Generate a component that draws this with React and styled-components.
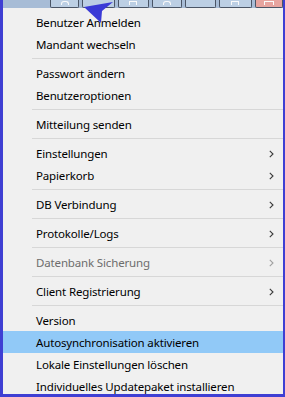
import React from "react";
import styled, { createGlobalStyle } from "styled-components";

const GlobalStyle = createGlobalStyle`
  html, body {
    margin: 0;
    padding: 0;
    background: #ffffff;
  }
  body {
    font-family: "Noto Sans", "Segoe UI", sans-serif;
  }
`;

const items = [
  { label: "Benutzer Anmelden" },
  { label: "Mandant wechseln" },
  { sep: true },
  { label: "Passwort ändern" },
  { label: "Benutzeroptionen" },
  { sep: true },
  { label: "Mitteilung senden" },
  { sep: true },
  { label: "Einstellungen", sub: true },
  { label: "Papierkorb", sub: true },
  { sep: true },
  { label: "DB Verbindung", sub: true },
  { sep: true },
  { label: "Protokolle/Logs", sub: true },
  { sep: true },
  { label: "Datenbank Sicherung", sub: true, disabled: true },
  { sep: true },
  { label: "Client Registrierung", sub: true },
  { sep: true },
  { label: "Version" },
  { label: "Autosynchronisation aktivieren", active: true },
  { label: "Lokale Einstellungen löschen" },
  { label: "Individuelles Updatepaket installieren" },
];

const buttons = [
  { w: 31, glyph: "round" },
  { w: 34, glyph: "none" },
  { w: 33, glyph: "square" },
  { w: 32, glyph: "round" },
  { w: 33, glyph: "none" },
  { w: 34, glyph: "square" },
  { w: 30, glyph: "close", close: true },
];

const App = () => (
  <>
    <GlobalStyle />
    <Frame>
      <Toolbar>
        {buttons.map((b, i) => (
          <ToolButton key={i} $w={b.w} $close={b.close}>
            {b.glyph !== "none" && <Glyph $kind={b.glyph} />}
          </ToolButton>
        ))}
      </Toolbar>
      <Menu>
        {items.map((it, i) =>
          it.sep ? (
            <Separator key={i} />
          ) : (
            <Item key={i} $active={it.active} $disabled={it.disabled}>
              <Label>{it.label}</Label>
              {it.sub && (
                <svg width="5" height="8" viewBox="0 0 5 8">
                  <path
                    d="M0.8 0.8 L4 4 L0.8 7.2"
                    fill="none"
                    stroke={it.disabled ? "#a0a0a0" : "#3a3a3a"}
                    strokeWidth="1.1"
                  />
                </svg>
              )}
            </Item>
          )
        )}
      </Menu>
      <Pointer width="34" height="26" viewBox="0 0 34 26">
        <polygon points="1,6 30,1 19,10 18,22" fill="#3a3ad6" />
      </Pointer>
    </Frame>
  </>
);

export default App;

const Frame = styled.div`
  position: relative;
  width: 285px;
  height: 397px;
  box-sizing: border-box;
  border-left: 3px solid #3f3fd3;
  border-right: 2px solid #3f3fd3;
  border-bottom: 3px solid #3f3fd3;
  background: #f0f0f0;
  overflow: hidden;
  display: flex;
  flex-direction: column;
`;

const Toolbar = styled.div`
  height: 8px;
  flex: none;
  background: #a7bcd6;
  display: flex;
  align-items: stretch;
  padding-left: 47px;
  gap: 3px;
`;

const ToolButton = styled.div`
  width: ${(p) => p.$w}px;
  box-sizing: border-box;
  border: 1px solid #4a5566;
  border-top: none;
  background: ${(p) => (p.$close ? "#e7a49f" : "#bccfe4")};
  display: flex;
  justify-content: center;
  align-items: flex-end;
  border-radius: 0 0 2px 2px;
`;

const Glyph = styled.div`
  width: ${(p) => (p.$kind === "close" ? 8 : 6)}px;
  height: 3px;
  margin-bottom: 2px;
  border: 1px solid #fafafa;
  border-bottom: none;
  border-radius: ${(p) => (p.$kind === "round" ? "3px 3px 0 0" : "0")};
`;

const Menu = styled.div`
  padding-top: 3px;
  flex: 1;
`;

const Item = styled.div`
  height: 22px;
  display: flex;
  align-items: center;
  justify-content: space-between;
  padding: 1px 9px 0 33px;
  box-sizing: border-box;
  font-size: 11.5px;
  color: ${(p) => (p.$disabled ? "#6d6d6d" : "#000000")};
  background: ${(p) => (p.$active ? "#91c9f7" : "transparent")};
`;

const Label = styled.span`
  white-space: nowrap;
  letter-spacing: -0.15px;
`;

const Separator = styled.div`
  height: 7px;
  margin-left: 29px;
  display: flex;
  align-items: center;

  &::after {
    content: "";
    flex: 1;
    height: 1px;
    background: #d7d7d7;
  }
`;

const Pointer = styled.svg`
  position: absolute;
  left: 80px;
  top: 1px;
`;
